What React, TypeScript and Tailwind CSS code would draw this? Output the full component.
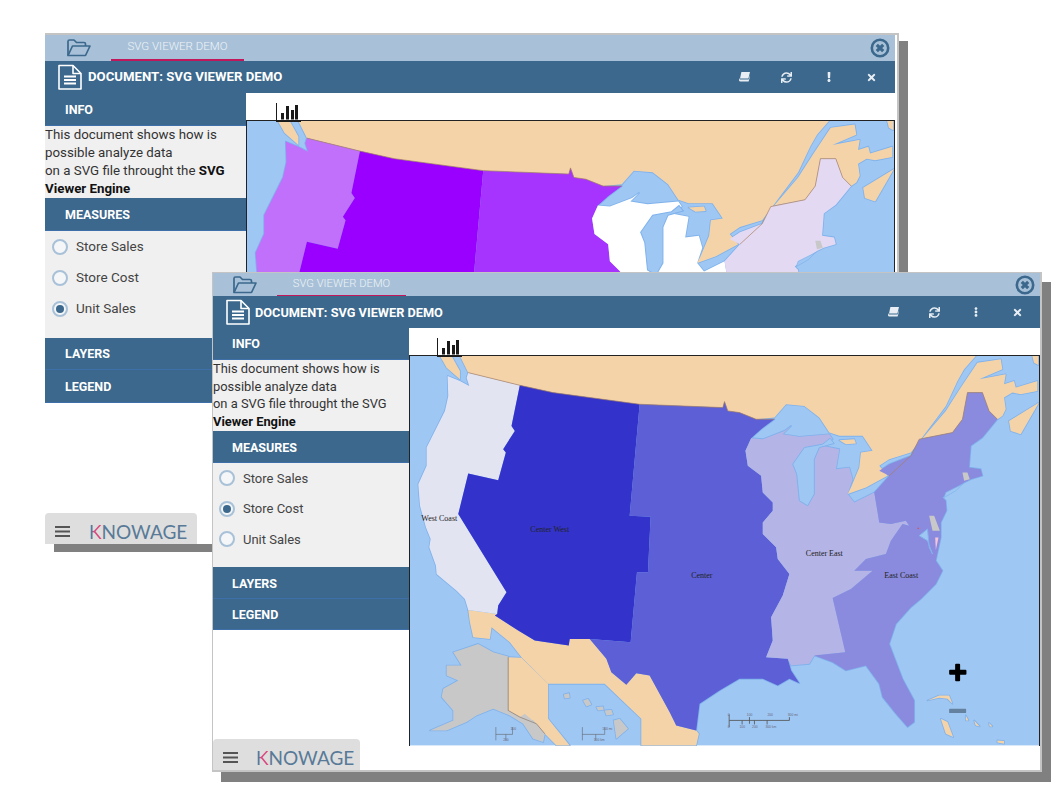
import React from 'react';
import { FaExclamation, FaEllipsisV, FaSync, FaTimes } from 'react-icons/fa';

type Fills = { west: string; centerWest: string; center: string; centerEast: string; eastCoast: string };

const BACK_FILLS: Fills = { west: '#c070fb', centerWest: '#9900ff', center: '#a733fe', centerEast: '#ffffff', eastCoast: '#e3d9f3' };
const FRONT_FILLS: Fills = { west: '#e3e4f2', centerWest: '#3333cc', center: '#5c5fd6', centerEast: '#b4b4e6', eastCoast: '#8a8ade' };

const PEACH = '#f5d3a8';
const WATER = '#9fc7f3';
const GRAY = '#c8c8c8';

function landShapes(f: Fills) {
  return [
    // canada, north shore of the lakes and the st lawrence
    { fill: PEACH, pts: '150,15 175,65 330,103 430,125 690,160 940,170 945,152 955,180 990,185 1040,205 1095,200 1130,160 1185,165 1230,200 1260,245 1290,255 1360,255 1390,300 1355,305 1350,350 1325,410 1315,430 1370,410 1435,375 1410,345 1440,325 1505,305 1535,265 1610,165 1645,90 1665,55 1700,15' },
    { fill: PEACH, pts: '90,15 125,15 150,60 150,85 110,50' },
    { fill: PEACH, pts: '1290,268 1335,265 1340,278 1310,280' },
    // south of the river
    { fill: PEACH, pts: '1540,262 1610,180 1655,110 1705,35 1775,25 1780,55 1710,85 1790,70 1785,100 1815,90 1820,110 1885,90 1885,120 1835,130 1810,125 1785,140 1790,175 1780,195 1765,205 1740,180 1720,125 1675,125 1660,205 1630,245' },
    { fill: PEACH, pts: '1800,210 1890,155 1835,250 1805,240' },
    { fill: PEACH, pts: '1870,15 1888,15 1888,42 1875,35' },
    // mexico
    { fill: PEACH, pts: '175,778 262,790 255,795 325,840 375,870 477,885 480,865 540,865 590,925 605,965 650,1003 680,968 720,975 750,1030 780,1085 800,1125 860,1140 868,1150 860,1185 695,1185 695,1105 585,1000 415,1000 335,920 300,875 245,830 240,865 190,860 180,815' },
    // yukon beside the alaska inset
    { fill: PEACH, pts: '295,920 335,922 415,1000 415,1105 480,1185 440,1185 405,1150 370,1110 330,1100 295,1080' },
    // alaska
    { fill: GRAY, pts: '205,880 250,905 295,918 295,1080 330,1100 345,1090 380,1120 405,1150 400,1175 370,1165 340,1120 300,1095 250,1075 200,1095 170,1115 110,1140 60,1140 130,1110 130,1080 95,1040 100,1015 145,990 110,975 110,945 155,945 130,905' },
    // hawaii
    { fill: GRAY, pts: '612,1110 630,1105 655,1135 620,1165' },
    { fill: GRAY, pts: '585,1080 605,1078 610,1092 590,1095' },
    { fill: GRAY, pts: '560,1070 580,1068 582,1078 565,1080' },
    { fill: GRAY, pts: '520,1050 535,1045 545,1062 530,1068' },
    { fill: GRAY, pts: '462,1032 478,1028 480,1042 465,1044' },
    // regions
    { fill: f.west, pts: '175,65 330,103 305,225 315,240 280,295 288,305 265,388 175,368 145,490 290,725 265,765 262,790 175,778 165,745 140,720 80,670 78,645 58,590 62,565 48,530 30,465 25,400 50,345 50,290 105,180 115,135 113,75 150,90 178,105 170,80' },
    { fill: f.centerWest, pts: '330,103 430,125 690,160 660,495 723,498 715,665 682,665 663,875 540,865 480,865 477,885 375,870 325,840 255,795 262,790 265,765 290,725 145,490 175,368 265,388 288,305 280,295 315,240 305,225' },
    { fill: f.center, pts: '690,160 940,170 945,152 955,180 990,185 1040,205 1095,205 1055,235 1025,262 1008,300 1015,345 1055,375 1060,425 1090,455 1090,480 1060,515 1060,550 1100,590 1105,625 1140,670 1120,735 1085,800 1090,870 1070,920 1135,925 1145,960 1170,998 1140,985 1105,1005 1060,985 990,985 930,1020 870,1060 860,1140 800,1125 780,1085 750,1030 720,975 680,968 650,1003 605,965 590,925 540,865 663,875 682,665 715,665 723,498 660,495' },
    { fill: f.centerEast, pts: '1025,262 1060,265 1125,240 1145,225 1120,250 1170,258 1260,250 1270,265 1240,285 1290,295 1280,355 1320,350 1330,385 1315,430 1335,455 1395,425 1410,515 1445,520 1490,510 1500,525 1480,520 1445,570 1430,610 1370,625 1335,660 1390,660 1325,715 1270,742 1308,905 1215,915 1200,940 1145,945 1135,925 1070,920 1090,870 1085,800 1120,735 1140,670 1105,625 1100,590 1060,550 1060,515 1090,480 1090,455 1060,425 1055,375 1015,345 1008,300' },
    { fill: f.eastCoast, pts: '1675,125 1720,125 1740,180 1765,205 1720,260 1685,285 1680,350 1715,355 1720,375 1685,385 1665,395 1620,425 1600,440 1610,450 1612,480 1595,515 1595,560 1580,630 1600,660 1580,700 1535,745 1505,770 1460,820 1440,880 1480,985 1515,1050 1515,1115 1495,1130 1460,1090 1420,1040 1410,1000 1370,945 1310,960 1270,935 1215,915 1308,905 1270,742 1325,715 1390,660 1335,660 1370,625 1430,610 1445,570 1480,520 1500,525 1490,510 1445,520 1410,515 1395,425 1440,375 1410,360 1440,340 1505,315 1530,265 1630,245 1660,205' },
    // bahamas and cuba
    { fill: PEACH, pts: '1555,1050 1590,1035 1620,1035 1630,1060 1615,1045 1590,1042' },
    { fill: PEACH, pts: '1595,1105 1615,1115 1632,1160 1610,1150' },
    { fill: PEACH, pts: '1670,1095 1678,1110 1670,1110' },
    { fill: PEACH, pts: '1695,1110 1712,1128 1700,1125' },
    { fill: PEACH, pts: '1740,1118 1750,1128 1742,1128' },
    { fill: PEACH, pts: '1765,1170 1785,1172 1785,1180 1765,1176' },
  ];
}

function USMap({ fills, className }: { fills: Fills; className: string }) {
  const shapes = landShapes(fills);
  return (
    <svg viewBox="0 15 1890 1170" preserveAspectRatio="xMinYMin meet" className={className}>
      <rect x="0" y="15" width="1890" height="1170" fill={WATER} />
      <g fill="#7fb2ec" stroke="#7fb2ec" strokeWidth="5" strokeLinejoin="round">
        {shapes.map((s, i) => <polygon key={i} points={s.pts} />)}
      </g>
      {shapes.map((s, i) => <polygon key={i} points={s.pts} fill={s.fill} />)}

      {/* lakes and bays cut into the regions */}
      <polygon points="1150,340 1185,290 1240,280 1262,262 1275,278 1230,290 1215,325 1215,400 1215,430 1195,465 1170,450 1162,370" fill={WATER} stroke="#7fb2ec" strokeWidth="3" />
      <polygon points="1530,555 1555,535 1560,590 1570,610 1555,570" fill={WATER} stroke="#7fb2ec" strokeWidth="3" />
      <polygon points="1610,425 1660,400 1640,420 1605,440" fill={WATER} stroke="#7fb2ec" strokeWidth="2" />

      {/* small states */}
      <polygon points="1560,495 1575,495 1592,540 1570,540" fill={GRAY} />
      <polygon points="1578,560 1588,560 1580,598" fill="#f3c6d8" />
      <polygon points="1660,365 1675,365 1682,385 1665,390" fill={GRAY} />
      <rect x="1525" y="531" width="4" height="4" fill="#d9534f" />

      {/* border with canada */}
      <polyline points="175,65 330,103 430,125 690,160 940,170 945,152 955,180 990,185 1040,205 1095,205" fill="none" stroke="#a87c5c" strokeWidth="2" />
      <polyline points="1440,375 1505,315 1530,265 1630,245 1660,205 1675,125 1720,125 1740,180 1765,205" fill="none" stroke="#a87c5c" strokeWidth="2" />
      <polyline points="295,920 295,1080 330,1100 380,1120 405,1150" fill="none" stroke="#8a7468" strokeWidth="2" />

      {/* labels */}
      <g fontFamily="'Liberation Serif', serif" fontSize="24" fill="#222" textAnchor="middle">
        <text x="88" y="512">West Coast</text>
        <text x="420" y="544">Center West</text>
        <text x="877" y="682">Center</text>
        <text x="1245" y="617">Center East</text>
        <text x="1476" y="682">East Coast</text>
      </g>

      {/* scale bars */}
      <g stroke="#555" strokeWidth="2.5" fill="none">
        <path d="M959 1110H1140M959 1092V1130M1020 1100V1120M1140 1100V1110M998 1110V1122M1035 1110V1122M1073 1110V1122" />
        <path d="M258 1130V1170M258 1152H308M308 1130V1152M288 1152V1170" strokeWidth="1.5" />
        <path d="M518 1130V1170M518 1152H585M585 1130V1152M558 1152V1170" strokeWidth="1.5" />
      </g>
      <g fontFamily="'Liberation Sans', sans-serif" fontSize="10" fill="#667">
        <text x="955" y="1098">0</text>
        <text x="1012" y="1098">100</text>
        <text x="1074" y="1098">200</text>
        <text x="1135" y="1098">300 mi</text>
        <text x="955" y="1132">0</text>
        <text x="990" y="1132">100</text>
        <text x="1028" y="1132">200</text>
        <text x="1068" y="1132">300 km</text>
        <text x="302" y="1138">100</text>
        <text x="280" y="1172">200</text>
        <text x="578" y="1138">100 mi</text>
        <text x="552" y="1172">100 km</text>
      </g>

      {/* zoom controls */}
      <rect x="1620" y="958" width="52" height="15" rx="3" fill="#000" />
      <rect x="1638" y="940" width="15" height="52" rx="3" fill="#000" />
      <rect x="1620" y="1075" width="51" height="13" rx="2" fill="#64829f" />
    </svg>
  );
}

function DocIcon() {
  return (
    <svg viewBox="0 0 24 26" className="w-6 h-[26px] shrink-0" fill="none" stroke="#fff" strokeWidth="1.6" strokeLinejoin="round">
      <path d="M1 1.5H15L23 9.5V25H1Z" />
      <path d="M15 1.5V9.5H23" />
      <path d="M6 12.5H18M6 16H18M6 19.5H18" strokeWidth="2" />
    </svg>
  );
}

function FolderIcon() {
  return (
    <svg viewBox="0 0 24 18" className="w-6 h-[18px] shrink-0" fill="none" stroke="#3b688c" strokeWidth="1.7" strokeLinejoin="round">
      <path d="M1 16.5V2.5Q1 1 2.5 1H7L9.5 3.5H17Q18.5 3.5 18.5 5V7" />
      <path d="M1 16.5L5.5 7H23L18.5 16.5Z" />
    </svg>
  );
}

function CloseCircle() {
  return (
    <svg viewBox="0 0 20 20" className="w-5 h-5 shrink-0">
      <circle cx="10" cy="10" r="8.2" fill="none" stroke="#3b688c" strokeWidth="2.6" />
      <path d="M6.8 6.8L13.2 13.2M13.2 6.8L6.8 13.2" stroke="#3b688c" strokeWidth="3.2" />
    </svg>
  );
}

function BookIcon() {
  return (
    <svg viewBox="0 0 11 10" className="w-[11px] h-[10px]" fill="#e8eef4">
      <path d="M2.4 0H11L9.4 6.6H1Z" />
      <path d="M0.3 6L1 7.4H9.6L11 3.4V4.6L9.6 9.6H1.6Q0 9.6 0 8.2Z" />
    </svg>
  );
}

function ChartIcon() {
  return (
    <svg viewBox="0 0 25 19" className="w-[25px] h-[19px] relative z-10 -mb-[2px]" fill="#1a1a1a">
      <rect x="0" y="0" width="1" height="19" />
      <rect x="0" y="17.5" width="25" height="1.5" />
      <rect x="5" y="10" width="3" height="6.5" />
      <rect x="10" y="3" width="3" height="13.5" />
      <rect x="15" y="7" width="3" height="9.5" />
      <rect x="19" y="2" width="3" height="14.5" />
    </svg>
  );
}

function MenuLines() {
  return (
    <svg viewBox="0 0 15 11" className="ml-[10px] w-[15px] h-[11px] shrink-0" fill="#555">
      <path d="M0 0H15V2H0ZM0 4.5H15V6.5H0ZM0 9H15V11H0Z" />
    </svg>
  );
}

function Logo() {
  return (
    <span className="font-['Lato'] font-normal text-[19px] leading-none text-[#587a98] whitespace-nowrap">
      <span className="bg-[linear-gradient(90deg,#587a98_34%,#d9477f_34%)] bg-clip-text text-transparent">K</span>
      NOWAGE
    </span>
  );
}

function Header({ label, className }: { label: string; className: string }) {
  return (
    <div className={`flex items-center bg-[#3b688c] border-b border-[#3f6fa8] text-white font-bold text-[12.5px] ${className}`}>
      {label}
    </div>
  );
}

function Radio({ label, checked, className }: { label: string; checked?: boolean; className: string }) {
  return (
    <div className={`flex items-center text-[#444] ${className}`}>
      <span className="w-4 h-4 rounded-full border-2 border-[#a8c1d8] bg-[#f4f6f8] flex items-center justify-center shrink-0">
        {checked && <span className="w-2 h-2 rounded-full bg-[#3b688c]" />}
      </span>
      <span className="ml-2">{label}</span>
    </div>
  );
}

function BackWindow() {
  return (
    <div className="absolute left-[45px] top-[33px] w-[854px] h-[511px] bg-white border-t-2 border-r-2 border-[#c4c4c4] pr-[2px] shadow-[9px_8px_0_#808080] flex flex-col font-['Roboto']">
      <div className="h-[26px] bg-[#a8c1d8] flex items-center shrink-0">
        <div className="ml-[22px]"><FolderIcon /></div>
        <div className="ml-5 w-[133px] h-full border-b-2 border-[#c2185b] flex items-center justify-center text-[11.5px] font-light text-[#eef3f7]">SVG VIEWER DEMO</div>
        <div className="ml-auto mr-[5px]"><CloseCircle /></div>
      </div>
      <div className="h-8 bg-[#3b688c] flex items-center shrink-0">
        <div className="ml-[13px]"><DocIcon /></div>
        <span className="ml-[6px] text-white font-bold text-[13.2px]">DOCUMENT: SVG VIEWER DEMO</span>
        <div className="ml-auto mr-[2px] flex text-[#e8eef4]">
          <div className="w-[42.5px] flex justify-center items-center"><BookIcon /></div>
          <div className="w-[42.5px] flex justify-center items-center"><FaSync size={11} /></div>
          <div className="w-[42.5px] flex justify-center items-center"><FaExclamation size={10} /></div>
          <div className="w-[42.5px] flex justify-center items-center"><FaTimes size={11} /></div>
        </div>
      </div>
      <div className="flex flex-1 min-h-0">
        <div className="w-[201px] shrink-0 flex flex-col">
          <Header label="INFO" className="h-[33px] pl-5 pt-[3px]" />
          <div className="bg-[#f0f0f0] h-[72px] text-[13.3px] leading-[18px] text-[#333]">
            This document shows how is<br />possible analyze data<br />on a SVG file throught the <b className="font-bold text-[#111]">SVG Viewer Engine</b>
          </div>
          <Header label="MEASURES" className="h-[33px] pl-5 pt-[2px]" />
          <div className="bg-[#f0f0f0] h-[107px] pl-[7px] text-[13.5px]">
            <Radio label="Store Sales" className="h-[31px]" />
            <Radio label="Store Cost" className="h-[31px]" />
            <Radio label="Unit Sales" checked className="h-[31px]" />
          </div>
          <Header label="LAYERS" className="h-8 pl-5 pt-[2px]" />
          <Header label="LEGEND" className="h-[33px] pl-5 pt-[2px]" />
          <div className="mt-auto w-[152px] h-[31px] pt-[6px] bg-[#dedede] rounded-t flex items-center">
            <MenuLines />
            <div className="ml-[19px] flex items-center"><Logo /></div>
          </div>
        </div>
        <div className="flex-1 min-w-0 flex flex-col">
          <div className="h-[27px] flex items-end pl-[30px] shrink-0"><ChartIcon /></div>
          <div className="flex-1 min-h-0 overflow-hidden border-t border-l border-r border-[#222]">
            <USMap fills={BACK_FILLS} className="w-full h-[401px]" />
          </div>
        </div>
      </div>
    </div>
  );
}

function FrontWindow() {
  return (
    <div className="absolute left-[212px] top-[272px] w-[830px] h-[500px] bg-white border-t border-l border-r-2 border-b-2 border-[#c4c4c4] shadow-[9px_10px_0_#808080] flex flex-col font-['Roboto']">
      <div className="h-[23px] bg-[#a8c1d8] flex items-center shrink-0">
        <div className="ml-5"><FolderIcon /></div>
        <div className="ml-5 w-[129px] h-full border-b border-[#c2185b] flex items-center justify-center text-[11.2px] font-light text-[#eef3f7]">SVG VIEWER DEMO</div>
        <div className="ml-auto mr-[5px]"><CloseCircle /></div>
      </div>
      <div className="h-8 bg-[#3b688c] flex items-center shrink-0">
        <div className="ml-[13px]"><DocIcon /></div>
        <span className="ml-[5px] pt-[1px] text-white font-bold text-[12.75px]">DOCUMENT: SVG VIEWER DEMO</span>
        <div className="ml-auto mr-[2px] flex text-[#e8eef4]">
          <div className="w-[41.3px] flex justify-center items-center"><BookIcon /></div>
          <div className="w-[41.3px] flex justify-center items-center"><FaSync size={11} /></div>
          <div className="w-[41.3px] flex justify-center items-center"><FaEllipsisV size={10} /></div>
          <div className="w-[41.3px] flex justify-center items-center"><FaTimes size={11} /></div>
        </div>
      </div>
      <div className="flex flex-1 min-h-0">
        <div className="w-[196px] shrink-0 flex flex-col">
          <Header label="INFO" className="h-8 pl-[19px] pt-[2px]" />
          <div className="bg-[#f0f0f0] h-[71px] text-[12.9px] leading-[17.7px] text-[#333]">
            This document shows how is<br />possible analyze data<br />on a SVG file throught the SVG <b className="font-bold text-[#111]">Viewer Engine</b>
          </div>
          <Header label="MEASURES" className="h-8 pl-[19px] pt-[3px]" />
          <div className="bg-[#f0f0f0] h-[104px] pl-[6px] text-[13px]">
            <Radio label="Store Sales" className="h-[30.5px]" />
            <Radio label="Store Cost" checked className="h-[30.5px]" />
            <Radio label="Unit Sales" className="h-[30.5px]" />
          </div>
          <Header label="LAYERS" className="h-8 pl-[19px] pt-[3px]" />
          <Header label="LEGEND" className="h-[31px] pl-[19px] pt-[3px]" />
          <div className="mt-auto w-[147px] h-[31px] pt-[5px] bg-[#dedede] rounded-t flex items-center">
            <MenuLines />
            <div className="ml-[18px] flex items-center"><Logo /></div>
          </div>
        </div>
        <div className="flex-1 min-w-0 flex flex-col">
          <div className="h-[27px] flex items-end pl-[28px] shrink-0"><ChartIcon /></div>
          <div className="h-[391px] shrink-0 border-t border-l border-r border-[#222]">
            <USMap fills={FRONT_FILLS} className="w-full h-full" />
          </div>
        </div>
      </div>
    </div>
  );
}

export default function App() {
  return (
    <div className="relative w-[1058px] h-[794px] bg-white overflow-hidden">
      <BackWindow />
      <FrontWindow />
    </div>
  );
}
